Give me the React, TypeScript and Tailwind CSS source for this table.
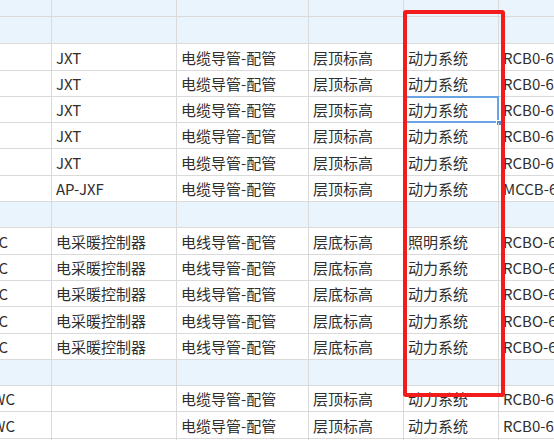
import React from 'react';

type Row = {
  h: 'a' | 'b' | 'c';
  blue?: boolean;
  cells?: string[];
};

const JXT = ['', 'JXT', '电缆导管-配管', '层顶标高', '动力系统', 'RCB0-63'];
const HEAT = (sys: string) => ['C', '电采暖控制器', '电线导管-配管', '层底标高', sys, 'RCBO-63'];
const WC = ['WC', '', '电缆导管-配管', '层顶标高', '动力系统', 'RCB0-63'];

const rows: Row[] = [
  { h: 'c', blue: true },
  { h: 'b', blue: true },
  { h: 'b', cells: JXT },
  { h: 'a', cells: JXT },
  { h: 'a', cells: JXT },
  { h: 'a', cells: JXT },
  { h: 'b', cells: JXT },
  { h: 'a', cells: ['', 'AP-JXF', '电缆导管-配管', '层顶标高', '动力系统', 'MCCB-63'] },
  { h: 'a', blue: true },
  { h: 'b', cells: HEAT('照明系统') },
  { h: 'a', cells: HEAT('动力系统') },
  { h: 'a', cells: HEAT('动力系统') },
  { h: 'b', cells: HEAT('动力系统') },
  { h: 'a', cells: HEAT('动力系统') },
  { h: 'a', blue: true },
  { h: 'a', cells: WC },
  { h: 'b', cells: WC },
  { h: 'a', cells: ['', '', '', '', '', ''] },
];

const widths = ['w-[52px]', 'w-[125px]', 'w-[132px]', 'w-[95px]', 'w-[95px]', 'w-[110px]'];

function Cell({ col, text, selected }: { col: number; text: string; selected: boolean }) {
  if (col === 0) {
    return (
      <div className={`${widths[0]} shrink-0 h-full border-r border-[#dadada] overflow-hidden flex items-center justify-end ${text === 'WC' ? 'pr-[36px]' : 'pr-[43px]'}`}>
        <span className="whitespace-nowrap pt-[2px]">{text}</span>
      </div>
    );
  }
  return (
    <div className={`${widths[col]} shrink-0 h-full border-r border-[#dadada] relative flex items-center pl-[4px]`}>
      <span className="whitespace-nowrap overflow-hidden pt-[2px]">{text}</span>
      {selected && (
        <div className="absolute left-[-1px] top-[-1px] right-[-1px] bottom-[-1px] border-2 border-[#6aa3e3]">
          <div className="absolute right-[-5px] bottom-[-5px] w-[6px] h-[6px] bg-[#4a8fdb] border border-white" />
        </div>
      )}
    </div>
  );
}

export default function App() {
  return (
    <div className="relative w-[554px] h-[440px] overflow-hidden bg-white text-[15px] text-[#2f2f2f] font-['Noto_Sans_CJK_SC','Microsoft_YaHei',sans-serif]">
      {rows.map((r, i) => (
        <div
          key={i}
          className={`flex border-b border-[#dadada] ${r.h === 'a' ? 'h-[26px]' : r.h === 'b' ? 'h-[27px]' : 'h-[17px]'} ${r.blue ? 'bg-[#e9f4fd]' : 'bg-white'}`}
        >
          {widths.map((_, c) => (
            <Cell key={c} col={c} text={r.cells ? r.cells[c] : ''} selected={i === 4 && c === 4} />
          ))}
        </div>
      ))}
      {/* red annotation box */}
      <div className="absolute left-[403px] top-[10px] w-[102px] h-[387px] border-4 border-[#f21c1c] rounded-[3px] pointer-events-none" />
    </div>
  );
}
